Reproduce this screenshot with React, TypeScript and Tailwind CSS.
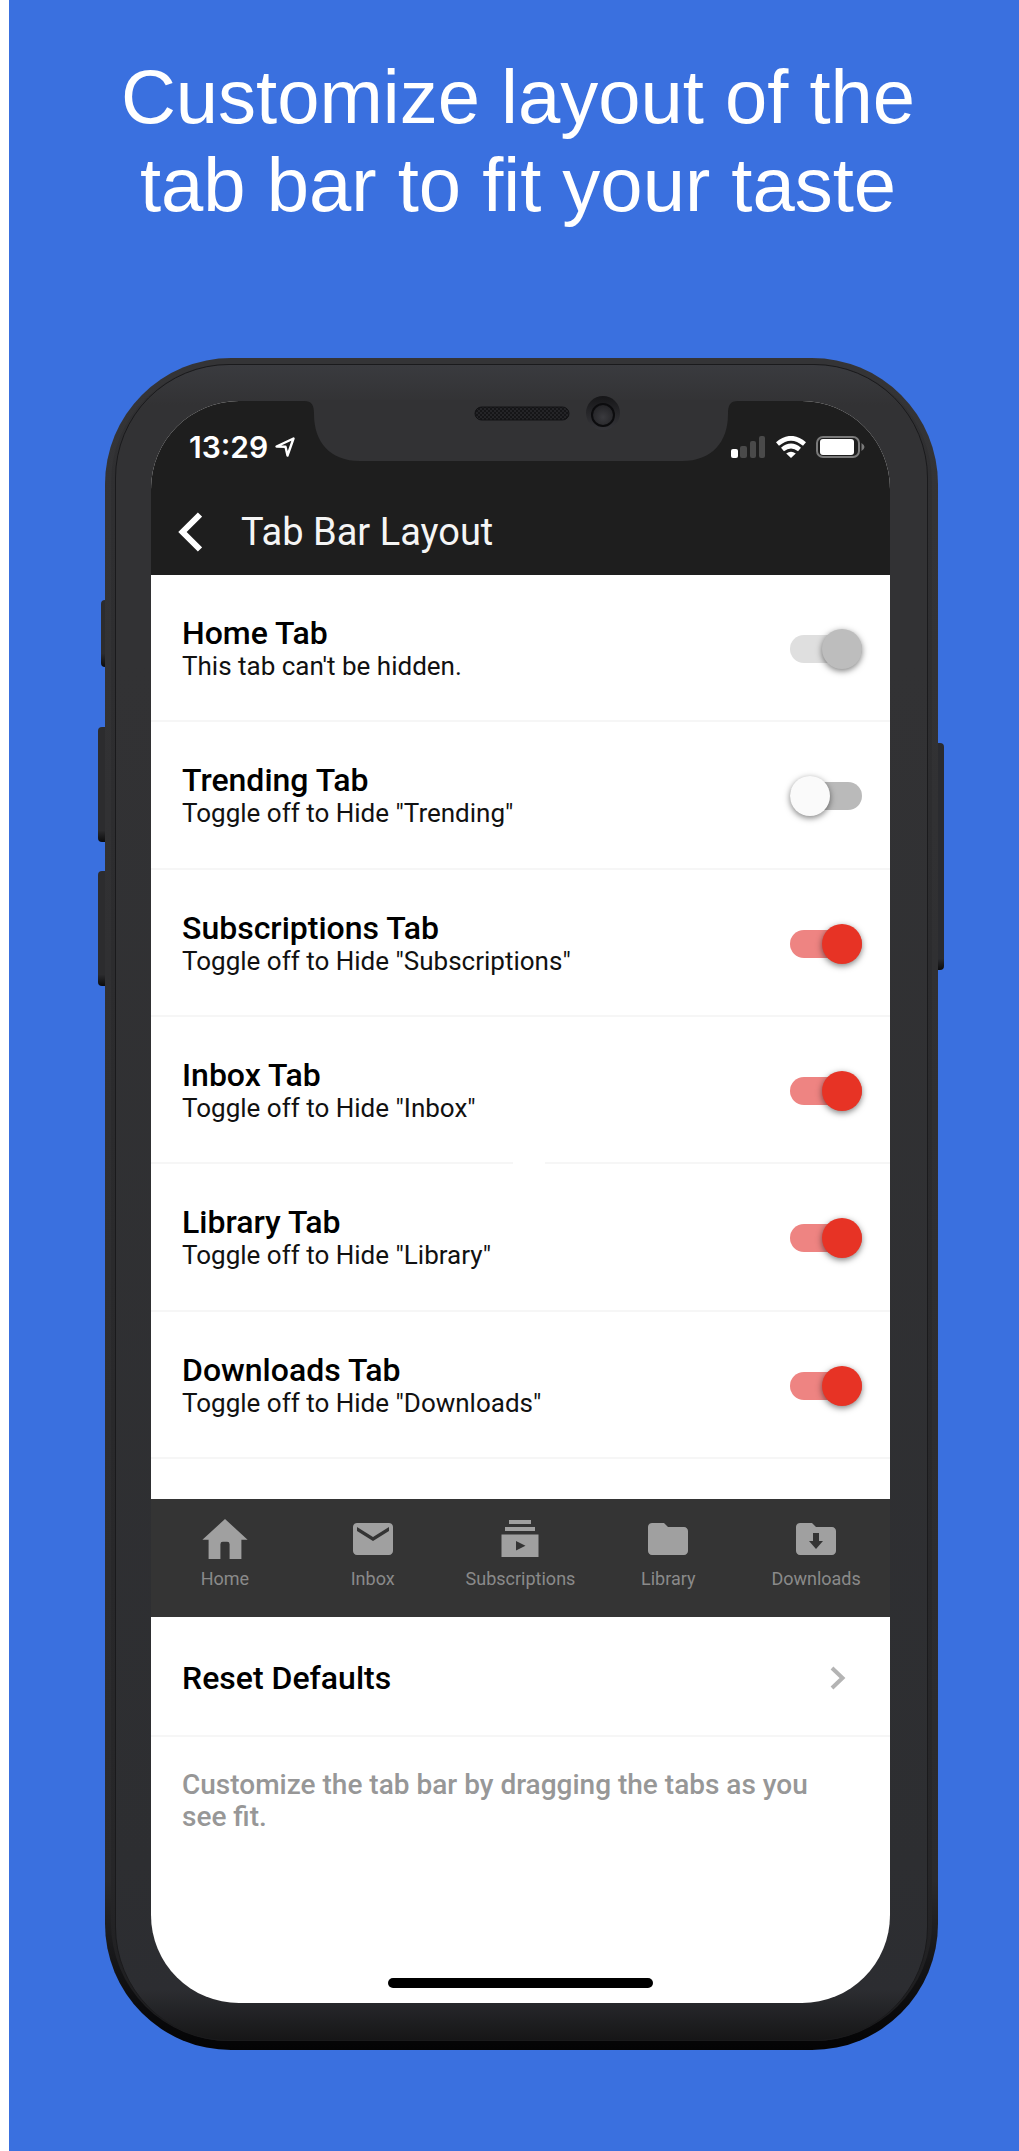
import { useState } from "react";
import type { ReactNode } from "react";
import { MdEmail, MdFolder } from "react-icons/md";

type TabSetting = {
  id: string;
  title: string;
  hint: string;
  on: boolean;
  disabled?: boolean;
};

const settings: TabSetting[] = [
  { id: "home", title: "Home Tab", hint: "This tab can't be hidden.", on: true, disabled: true },
  { id: "trending", title: "Trending Tab", hint: 'Toggle off to Hide "Trending"', on: false },
  { id: "subscriptions", title: "Subscriptions Tab", hint: 'Toggle off to Hide "Subscriptions"', on: true },
  { id: "inbox", title: "Inbox Tab", hint: 'Toggle off to Hide "Inbox"', on: true },
  { id: "library", title: "Library Tab", hint: 'Toggle off to Hide "Library"', on: true },
  { id: "downloads", title: "Downloads Tab", hint: 'Toggle off to Hide "Downloads"', on: true },
];

function HomeIcon() {
  return (
    <svg viewBox="0 0 24 24" className="size-12" fill="currentColor" aria-hidden="true">
      <path d="M12 2L.7 12.4H3.8V22H9.7V14.6Q9.7 13.4 10.9 13.4H13.1Q14.3 13.4 14.3 14.6V22H20.2V12.4H23.3Z" />
    </svg>
  );
}

function SubscriptionsIcon() {
  return (
    <svg viewBox="0 0 48 48" className="size-12" fill="currentColor" aria-hidden="true">
      <path d="M13 5h22v4H13zM9 12h30v4H9z" />
      <path fillRule="evenodd" d="M5.500 19.500h37v22.500h-37zM20 26v9.500l9.500-4.750z" />
    </svg>
  );
}

function DownloadsIcon() {
  return (
    <svg viewBox="0 0 24 24" className="size-12" fill="currentColor" aria-hidden="true">
      <path
        fillRule="evenodd"
        d="M10 4H4c-1.100 0-1.990.9-1.990 2L2 18c0 1.100.9 2 2 2h16c1.100 0 2-.9 2-2V8c0-1.100-.9-2-2-2h-8zM10.500 9h3v4h2L12 17l-3.500-4h2z"
      />
    </svg>
  );
}

const tabs: { label: string; icon: ReactNode }[] = [
  { label: "Home", icon: <HomeIcon /> },
  { label: "Inbox", icon: <MdEmail className="size-12" /> },
  { label: "Subscriptions", icon: <SubscriptionsIcon /> },
  { label: "Library", icon: <MdFolder className="size-12" /> },
  { label: "Downloads", icon: <DownloadsIcon /> },
];

/* Speaker and camera housing that hangs into the top of the display. */
function Notch() {
  return (
    <svg
      viewBox="0 0 434 62"
      className="absolute -top-px left-1/2 h-[62px] w-[434px] -translate-x-1/2 overflow-visible"
      aria-hidden="true"
    >
      <defs>
        <pattern id="mesh" width="4" height="4" patternUnits="userSpaceOnUse">
          <path d="M0 0h4v4H0z" fill="#151517" />
          <path d="M0 0h2v2H0zM2 2h2v2H2z" fill="#242427" />
        </pattern>
        <radialGradient id="lens" cx=".5" cy=".6" r=".6">
          <stop offset="0" stopColor="#3a3a3e" />
          <stop offset="1" stopColor="#222225" />
        </radialGradient>
        <linearGradient id="well" x1="0" y1="0" x2="0" y2="1">
          <stop offset="0" stopColor="#161618" />
          <stop offset="1" stopColor="#36363a" />
        </linearGradient>
      </defs>
      <path d="M0 0V1C8 1 10 5 10 14C10 42 26 61 56 61H378C408 61 424 42 424 14C424 5 426 1 434 1V0Z" fill="#323234" />
      <rect x="171" y="7" width="94" height="13" rx="6.500" fill="url(#mesh)" stroke="#121214" />
      <circle cx="299" cy="13" r="17" fill="url(#well)" />
      <circle cx="299" cy="15" r="11" fill="url(#lens)" stroke="#0c0c0e" strokeWidth="2" />
    </svg>
  );
}

function StatusBar() {
  return (
    <div className="flex h-[61px] items-end justify-between pr-[25px] pl-[38px] text-white">
      <div className="flex items-center gap-[7px]">
        <span className="font-[Inter,sans-serif] text-[30px] leading-[30px] font-semibold">13:29</span>
        <svg viewBox="0 0 20 20" className="size-5" aria-hidden="true">
          <path d="M1.500 9.500L18.500 1.500L12.500 18.500L10.500 9.800Z" fill="none" stroke="currentColor" strokeWidth="2.400" strokeLinejoin="round" />
        </svg>
      </div>
      <div className="flex h-[30px] items-center gap-[10px]">
        <svg viewBox="0 0 35 22" className="h-[22px] w-[35px]" aria-hidden="true">
          <rect x="0" y="13" width="7" height="9" rx="2" fill="#fff" />
          <rect x="9" y="10" width="7" height="12" rx="2" fill="#4a4a4a" />
          <rect x="19" y="5" width="6" height="17" rx="2" fill="#4a4a4a" />
          <rect x="28" y="0" width="6" height="22" rx="2" fill="#4a4a4a" />
        </svg>
        <svg viewBox="0 0 30 22" className="h-[22px] w-[30px]" aria-hidden="true">
          <g fill="none" stroke="#fff" strokeWidth="4.600">
            <path d="M1.500 8Q15-3.500 28.500 8" />
            <path d="M6.500 13.500Q15 6.500 23.500 13.500" />
          </g>
          <path d="M10.200 17.500Q15 14 19.800 17.500L15 22Z" fill="#fff" />
        </svg>
        <svg viewBox="0 0 49 22" className="h-[22px] w-[49px]" aria-hidden="true">
          <rect x="1" y="1" width="42" height="20" rx="6" fill="none" stroke="#7a7a7a" strokeWidth="2" />
          <rect x="4" y="3" width="34" height="16" rx="3" fill="#fff" />
          <path d="M45.500 7Q48.500 9 48.500 11Q48.500 13 45.500 15Z" fill="#7a7a7a" />
        </svg>
      </div>
    </div>
  );
}

function SettingRow({ item }: { item: TabSetting }) {
  const [on, setOn] = useState(item.on);
  return (
    <li className="relative flex items-center justify-between gap-6 border-b-2 border-[#f6f6f6] pt-[3px] pr-7 pl-[31px]">
      <label htmlFor={item.id} className="flex flex-col">
        <span className="text-[32px] leading-[34px] font-medium">{item.title}</span>
        <span className="text-[26px] leading-8 text-[#111]">{item.hint}</span>
      </label>
      <input
        id={item.id}
        type="checkbox"
        role="switch"
        checked={on}
        disabled={item.disabled}
        onChange={(e) => setOn(e.target.checked)}
        className="relative h-7 w-[72px] shrink-0 appearance-none rounded-full bg-[#bababa] before:absolute before:-top-1.5 before:left-0 before:size-10 before:rounded-full before:bg-[#fafafa] before:shadow-[0_2px_6px_rgba(0,0,0,0.5)] checked:bg-[#ee8482] checked:before:left-8 checked:before:bg-[#e73325] disabled:bg-[#dfdfdf] disabled:before:bg-[#bdbdbd]"
      />
      {item.id === "inbox" && <span className="absolute -bottom-0.5 left-[49%] h-0.5 w-8 bg-white" />}
    </li>
  );
}

export default function App() {
  return (
    <div className="flex min-h-screen bg-white pl-[9px] font-[Roboto,sans-serif] text-black">
      <main className="flex-1 bg-[#3a70df] pt-[53px] pb-[100px]">
        <h1 className="pl-2 text-center font-['Liberation_Sans',Arial,sans-serif] text-[76px] leading-[88px] text-white">
          Customize layout of the
          <br />
          tab bar to fit your taste
        </h1>

        <div className="relative mt-[129px] mr-[81px] ml-24">
          <span className="absolute top-[242px] -left-1 h-[67px] w-3 rounded-l bg-linear-to-b from-[#2c2c2e] from-80% to-[#0c0c0d]" />
          <span className="absolute top-[369px] -left-[7px] h-[115px] w-3 rounded-l bg-linear-to-b from-[#2c2c2e] from-90% to-[#0c0c0d]" />
          <span className="absolute top-[513px] -left-[7px] h-[115px] w-3 rounded-l bg-linear-to-b from-[#2c2c2e] from-90% to-[#0c0c0d]" />
          <span className="absolute top-[385px] -right-1.5 h-[227px] w-3 rounded-r bg-linear-to-b from-[#2a2b2f] from-95% to-[#0c0c0d]" />

          <div className="relative rounded-[126px] bg-linear-to-b from-[#343436] from-0% via-[#2a2a2c] via-90% to-[#040405] p-[6px] pb-[9px]">
            <div className="rounded-[118px] bg-linear-to-b from-[#303032] via-[#262628] via-90% to-[#1c1c1e] px-1">
              <div className="rounded-[114px] border border-[#1a1a1c] bg-[linear-gradient(180deg,#3a3b3f_0px,#323234_40px,#323234_300px,#2d2e31_1500px,#2c2d31_1625px,#161617_100%)] pt-9 pr-[37px] pb-[37px] pl-[35px]">
                <div className="relative">
                  <div className="overflow-hidden rounded-[88px] bg-white">
                    <header className="bg-[#1e1e1e]">
                      <StatusBar />
                      <div className="flex h-[113px] items-center pt-8 pb-[5px] pl-[27px]">
                        <button type="button" aria-label="Back" className="flex h-10 w-[63px] items-center text-white">
                          <svg viewBox="0 0 24 40" className="h-10 w-6" fill="none" stroke="currentColor" strokeWidth="6" aria-hidden="true">
                            <path d="M22 2.500L4.500 20L22 37.500" />
                          </svg>
                        </button>
                        <h2 className="text-[38px] leading-10 text-[#f5f5f5]">Tab Bar Layout</h2>
                      </div>
                    </header>

                    <ul className="grid min-h-[884px] grid-rows-6">
                      {settings.map((item) => (
                        <SettingRow key={item.id} item={item} />
                      ))}
                    </ul>

                    <nav className="mt-10 grid h-[118px] grid-cols-5 bg-[#343434] pt-4">
                      {tabs.map((tab) => (
                        <button key={tab.label} type="button" className="flex flex-col items-center gap-1 text-[#a0a0a0]">
                          {tab.icon}
                          <span className="text-lg leading-6 text-[#8a8a8a]">{tab.label}</span>
                        </button>
                      ))}
                    </nav>

                    <button type="button" className="flex h-[120px] w-full items-center justify-between border-b-2 border-[#f6f6f6] pt-[3px] pr-[44px] pl-[31px]">
                      <span className="text-[32px] leading-[34px] font-medium">Reset Defaults</span>
                      <svg viewBox="0 0 16 24" className="h-6 w-4" fill="none" stroke="#b4b4b4" strokeWidth="4" aria-hidden="true">
                        <path d="M2 2L12.500 12L2 22" />
                      </svg>
                    </button>

                    <p className="px-[31px] pt-8 text-[28px] leading-8 font-medium text-[#979797]">
                      Customize the tab bar by dragging the tabs as you see fit.
                    </p>

                    <div className="mx-auto mt-[145px] mb-[15px] h-2.5 w-[265px] rounded-full bg-black" />
                  </div>
                  <Notch />
                </div>
              </div>
            </div>
          </div>
        </div>
      </main>
    </div>
  );
}
